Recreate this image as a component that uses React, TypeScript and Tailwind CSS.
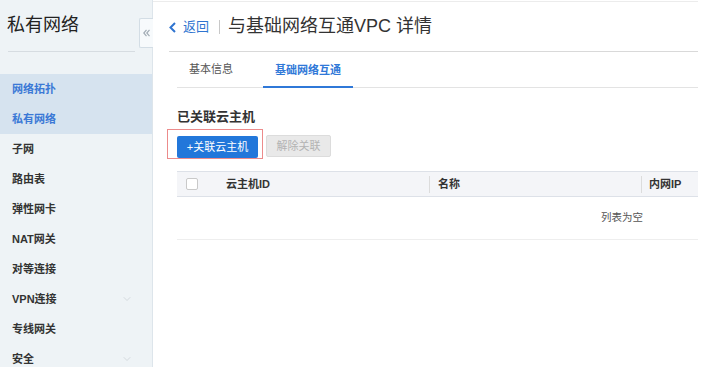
import { ChevronDown } from "lucide-react";

const menu = [
  { label: "网络拓扑", active: true },
  { label: "私有网络", active: true },
  { label: "子网" },
  { label: "路由表" },
  { label: "弹性网卡" },
  { label: "NAT网关" },
  { label: "对等连接" },
  { label: "VPN连接", arrow: true },
  { label: "专线网关" },
  { label: "安全", arrow: true },
];

function Sidebar() {
  return (
    <aside className="relative h-[367px] w-[153px] shrink-0 border-r border-[#dde5eb] bg-[#eef3f6]">
      <div className="mx-[8px] flex h-[52px] w-[127px] items-center border-b border-[#d6dce1] pb-[1px] text-[18px] leading-none text-[#222]">
        <span className="-ml-[1px]">私有网络</span>
      </div>

      {/* collapse tab */}
      <div className="absolute left-[139px] top-[18px] flex h-[30px] w-[14px] items-center justify-center rounded-l-[2px] border border-r-0 border-[#d3dde5] bg-[#f7fafc]">
        <svg width="7" height="8" viewBox="0 0 7 8" fill="none" stroke="#a3adb6" strokeWidth="1.2">
          <path d="M3.5 0.8 L0.8 4 L3.5 7.2" />
          <path d="M6.5 0.8 L3.8 4 L6.5 7.2" />
        </svg>
      </div>

      <ul className="mt-[22px]">
        {menu.map((m) => (
          <li
            key={m.label}
            className={`flex h-[30px] items-center justify-between pl-[12px] pr-[19px] text-[11px] font-bold ${
              m.active ? "bg-[#d6e3ef] text-[#3b79d6]" : "text-[#333]"
            }`}
          >
            <span>{m.label}</span>
            {m.arrow && <ChevronDown size={12} strokeWidth={1} className="text-[#b8bec4]" />}
          </li>
        ))}
      </ul>
    </aside>
  );
}

export default function App() {
  return (
    <div className="flex h-[375px] w-[705px] bg-white font-['Liberation_Sans','Noto_Sans_CJK_SC',sans-serif]">
      <Sidebar />

      <main className="mr-[7px] mt-[1px] h-[366px] flex-1 border-t border-[#ececec]">
        {/* header */}
        <div className="ml-[16px] flex h-[50px] items-center border-b border-[#d9d9d9]">
          <svg width="7" height="11" viewBox="0 0 7 11" fill="none" stroke="#2f74d0" strokeWidth="2" className="mt-[1px]">
            <path d="M6 1 L1.5 5.5 L6 10" />
          </svg>
          <span className="ml-[7px] text-[13px] text-[#2f74d0]">返回</span>
          <span className="ml-[10px] h-[14px] w-px bg-[#c8c8c8]" />
          <h1 className="ml-[8px] text-[18px] font-normal text-[#333]">与基础网络互通VPC 详情</h1>
        </div>

        <div className="ml-[24px]">
          {/* tabs */}
          <div className="flex h-[36px] border-b border-[#e3e3e3] text-[11px]">
            <div className="flex items-center px-[12px] text-[#555]">基本信息</div>
            <div className="-mb-px ml-[18px] flex items-center border-b-2 border-[#2f78d8] px-[12px] pt-[2px] font-bold text-[#2f78d8]">
              基础网络互通
            </div>
          </div>

          <h2 className="mt-[19px] h-[20px] text-[13px] font-bold leading-[20px] text-[#333]">已关联云主机</h2>

          {/* actions */}
          <div className="mt-[7px] flex items-center gap-[8px]">
            <div className="relative">
              <button className="h-[22px] w-[81px] rounded-[2px] bg-[#2277da] text-[11px] text-white">+关联云主机</button>
              <div className="absolute -left-[10px] -top-[5px] h-[30px] w-[96px] border border-[#ec8b8b]" />
            </div>
            <button className="h-[22px] w-[65px] rounded-[2px] border border-[#dcdcdc] bg-[#e9e9e9] text-[11px] text-[#b3b3b3]">
              解除关联
            </button>
          </div>

          {/* table */}
          <div className="mt-[13px] text-[11px]">
            <div className="grid h-[26px] grid-cols-[40px_212px_212px_57px] border-y border-[#dde1e8] bg-[#f4f5f8] font-bold text-[#333]">
              <div className="flex items-center pl-[9px]">
                <span className="h-[12px] w-[12px] rounded-[2px] border border-[#c9c9c9] bg-white" />
              </div>
              <div className="flex items-center pl-[9px]">云主机ID</div>
              <div className="flex items-center">
                <span className="h-[17px] w-px bg-[#dcdcdc]" />
                <span className="ml-[8px]">名称</span>
              </div>
              <div className="flex items-center">
                <span className="h-[17px] w-px bg-[#dcdcdc]" />
                <span className="ml-[7px]">内网IP</span>
              </div>
            </div>
            <div className="flex h-[43px] items-center border-b border-[#eeeeee] pl-[424px] text-[10.5px] text-[#555]">列表为空</div>
          </div>
        </div>
      </main>
    </div>
  );
}
